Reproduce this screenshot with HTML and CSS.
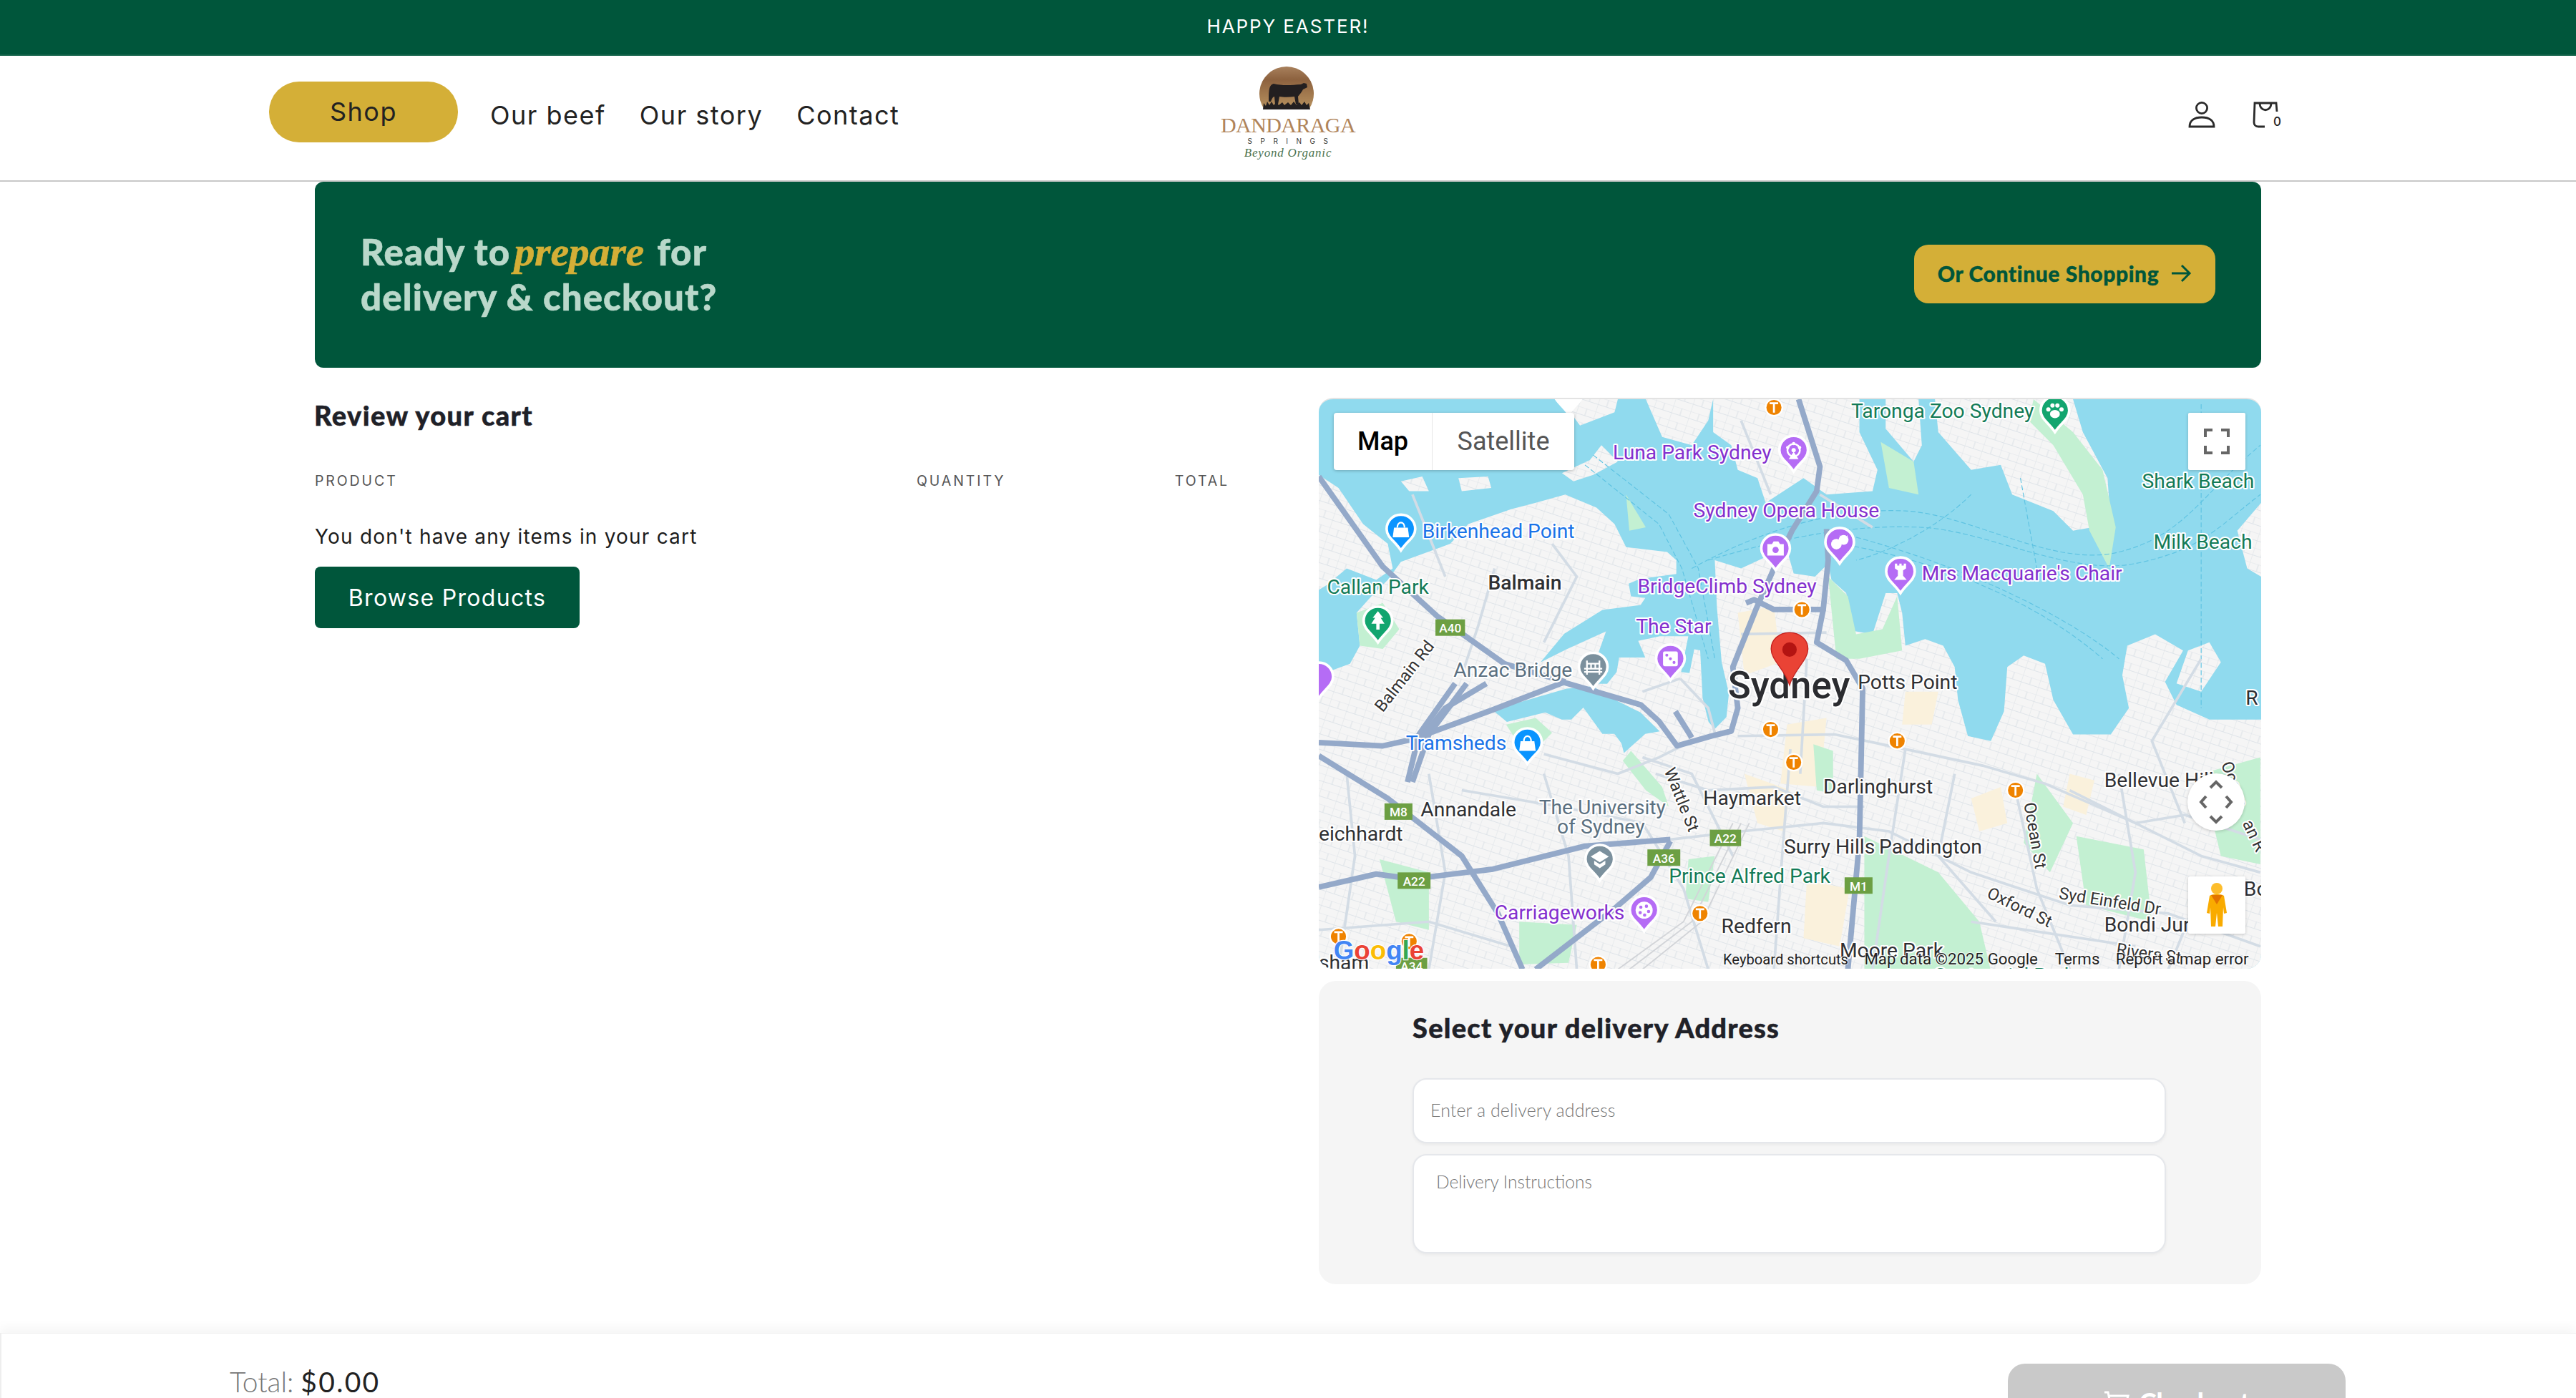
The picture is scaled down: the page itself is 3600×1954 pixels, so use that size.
FILE: index.html
```html
<!DOCTYPE html>
<html lang="en">
<head>
<meta charset="utf-8">
<title>Dandaraga Springs – Checkout</title>
<link rel="stylesheet" href="styles.css">
</head>
<body>
<div class="page">
  <div class="announce">HAPPY EASTER!</div>
  <header class="site-header">
    <nav class="nav">
      <a class="nav-shop">Shop</a>
      <a class="nav-link first">Our beef</a>
      <a class="nav-link">Our story</a>
      <a class="nav-link">Contact</a>
    </nav>
    <div class="logo">
      <svg class="logo-mark" viewBox="0 0 76 60" width="76" height="60">
        <defs><linearGradient id="sun" x1="0" y1="0" x2="0" y2="1"><stop offset="0" stop-color="#a8805c"/><stop offset=".3" stop-color="#8d623f"/><stop offset="1" stop-color="#b8925f"/></linearGradient></defs>
        <path d="M7 60 A38 38 0 1 1 69 60 Z" fill="url(#sun)"/>
        <path d="M13 45 C13 32 14 25 20 24 C32 27 44 26 58 25 L62 23 L66 24 L67 29 L61 32 C58 38 55 40 54 42 L55 53 L51 53 L49 42 C42 43 33 43 28 42 L26 53 L22 53 L21 42 C19 42 17 46 16 49 L13 49 Z" fill="#231f20"/>
        <path d="M5 60 L6 51 L9 55 L11 49 L14 54 L17 49 L20 54 L24 50 L27 54 L32 50 L35 54 L40 50 L44 54 L48 49 L52 54 L56 50 L59 54 L63 49 L66 54 L69 51 L71 60 Z" fill="#231f20"/>
      </svg>
      <div class="logo-name">DANDARAGA</div>
      <div class="logo-springs">SPRINGS</div>
      <div class="logo-tag">Beyond Organic</div>
    </div>
    <div class="header-icons">
      <svg class="icon-user" viewBox="0 0 40 40" width="40" height="40"><circle cx="20" cy="11" r="7.6"/><path d="M3 37 C3 28 10 24 20 24 C30 24 37 28 37 37 Z"/></svg>
      <span class="cart-wrap">
        <svg class="icon-bag" viewBox="0 0 40 40" width="40" height="40"><path d="M20 37 H11 C7 37 5 34 5 31 L6 4 H36 L37 16"/><path d="M13 4 C13 17 29 17 29 4"/></svg>
        <span class="cart-count">0</span>
      </span>
    </div>
  </header>

  <main class="main">
    <section class="banner">
      <h1 class="banner-title">Ready to <em class="script">prepare</em> for<br>delivery &amp; checkout?</h1>
      <a class="continue-btn">Or Continue Shopping
        <svg viewBox="0 0 30 26" width="30" height="26"><path d="M2 13 H27 M16 2 L27 13 L16 24"/></svg>
      </a>
    </section>

    <div class="columns">
      <section class="cart">
        <h2 class="cart-title">Review your cart</h2>
        <div class="cart-head"><span class="col-product">PRODUCT</span><span class="col-qty">QUANTITY</span><span class="col-total">TOTAL</span></div>
        <p class="cart-empty">You don't have any items in your cart</p>
        <a class="browse-btn">Browse Products</a>
      </section>

      <section class="side">
        <div class="map">
          <svg class="map-svg" viewBox="803 242 573.5 347.5" width="1317" height="798">
            <defs>
              <pattern id="streets" width="11" height="9" patternUnits="userSpaceOnUse" patternTransform="rotate(18)">
                <rect width="11" height="9" fill="#f5f5f5"/>
                <path d="M0 0H11M0 4.5H11M0 0V9M5.5 0V4.5" stroke="#dfe4e9" stroke-width=".5" fill="none"/>
              </pattern>
              <g id="pinbody"><path d="M0-8.700C4.900-8.700 8.700-4.900 8.700 0 8.700 5 3.500 7.500 0 13-3.500 7.500-8.700 5-8.700 0-8.700-4.900-4.900-8.700 0-8.700Z" fill="currentColor" stroke="#fff" stroke-width="1.600"/></g>
              <g id="i-bag"><path d="M-4.200-.8H4.200L5 5H-5Z" fill="#fff"/><path d="M-2.200-.8C-2.200-5 2.200-5 2.200-.8" fill="none" stroke="#fff" stroke-width="1"/></g>
              <g id="i-cam"><path d="M-5-2.800H-2.200L-1.200-4.500H1.700L2.700-2.800H5V4.200H-5Z" fill="#fff"/><circle cy=".7" r="1.900" fill="#b56cf5"/></g>
              <g id="i-cats"><circle cx="-2" cy="1.200" r="3.200" fill="#fff"/><circle cx="2.400" cy="-1.400" r="3" fill="#fff"/><path d="M.2-4.500L1-2.600H4L4.800-4.500 4.800-1 .2-1Z" fill="#fff"/></g>
              <g id="i-rook"><path d="M-3.400-5H-2V-3.800H-.7V-5H.7V-3.800H2V-5H3.400V-2L1.600-.8V2.500L3.800 5H-3.800L-1.600 2.500V-.8L-3.400-2Z" fill="#fff"/></g>
              <g id="i-tree"><path d="M0-6L3.200-2H1.700L4 1.600H1V5.200H-1V1.600H-4L-1.700-2H-3.200Z" fill="#fff"/></g>
              <g id="i-dice"><rect x="-4.500" y="-4.500" width="9" height="9" rx="1" fill="#fff"/><circle cx="-2.200" cy="-2.200" r=".9" fill="#b56cf5"/><circle r=".9" fill="#b56cf5"/><circle cx="2.200" cy="2.200" r=".9" fill="#b56cf5"/></g>
              <g id="i-bridge"><path d="M-5.500 1H5.500M-5.500 3H5.500M-3.800-4V4.600M3.800-4V4.600M-3.800-2H3.800M-1.300-2V1M1.300-2V1" stroke="#fff" stroke-width="1" fill="none"/></g>
              <g id="i-school"><path d="M0-5L5.500-1.600 0 1.800-5.500-1.600Z" fill="#fff"/><path d="M-3.400.9L0 3 3.400.9V3.200L0 5.400-3.400 3.200Z" fill="#fff"/></g>
              <g id="i-palette"><circle r="5.200" fill="#fff"/><circle cx="-2" cy="-1.800" r="1" fill="#b56cf5"/><circle cx="1.400" cy="-2.400" r="1" fill="#b56cf5"/><circle cx="2.700" cy=".8" r="1" fill="#b56cf5"/><circle cx="-2.400" cy="1.500" r="1" fill="#b56cf5"/><circle cx=".3" cy="3" r="1" fill="#b56cf5"/></g>
              <g id="i-ferris"><circle r="3.800" fill="none" stroke="#fff" stroke-width="1.100"/><circle r="1.300" fill="#fff"/><circle cy="-4" r="1" fill="#fff"/><circle cx="-3.600" cy="-1.600" r="1" fill="#fff"/><circle cx="3.600" cy="-1.600" r="1" fill="#fff"/><path d="M-3 5.500H3L0 1Z" fill="#fff"/></g>
              <g id="i-paw"><ellipse cy="2" rx="3" ry="2.500" fill="#fff"/><circle cx="-4" cy="-.8" r="1.300" fill="#fff"/><circle cx="-1.500" cy="-3.200" r="1.300" fill="#fff"/><circle cx="1.500" cy="-3.200" r="1.300" fill="#fff"/><circle cx="4" cy="-.8" r="1.300" fill="#fff"/></g>
              <g id="tstop"><circle r="5.100" fill="#ef8300" stroke="#fff" stroke-width="1"/><path d="M-2.600-2.600H2.600M0-2.600V3.200" stroke="#fff" stroke-width="1.200"/></g>
            </defs>

            <rect x="803" y="242" width="574" height="348" fill="url(#streets)"/>
            <g class="beige">
              <path d="M1058 372L1080 368 1084 402 1062 410Z"/>
              <path d="M1088 440L1112 436 1108 478 1084 476Z"/>
              <path d="M1062 470L1090 480 1086 505 1070 500Z"/>
              <path d="M1100 535L1126 540 1120 575 1098 570Z"/>
              <path d="M1200 485L1218 478 1222 500 1205 505Z"/>
              <path d="M1260 470L1275 474 1270 495 1256 490Z"/>
              <path d="M1160 420L1180 420 1176 440 1158 440Z"/>
            </g>
            <path class="park" d="M993 456L1012 478 1016 490 1002 480 988 462Z"/>
            <path class="park" d="M1135 508L1180 530 1205 560 1212 590H1135Z"/>
            <path class="park" d="M1104 452L1116 456 1116 482 1106 480Z"/>
            <path class="park" d="M1028 522L1044 520 1040 548 1026 546Z"/>
            <path class="park" d="M1264 508L1305 516 1310 560 1270 550Z"/>
            <path class="park" d="M840 522L870 530 870 565 850 560Z"/>
            <path class="park" d="M1240 470L1262 500 1248 530 1232 512Z"/>
            <path class="park" d="M1340 470L1376 460V525L1352 520Z"/>
            <path class="park" d="M925 560L960 562 955 585 925 586Z"/>
            <path class="park" d="M917 440L935 436 945 445 930 460Z"/>

            <path class="water" d="M803 242H1376.500V437H1345L1325 428 1318 414 1329 395 1312 385 1295 392 1292 410 1296 430 1285 446H1262L1250 425 1245 403 1232 398 1222 405 1220 432 1212 450 1198 447 1192 425 1190 405 1183 392 1172 388 1160 392 1158 372 1155 360 1148 360 1140 385 1128 383 1124 360 1115 352 1113 342 1105 350 1092 348 1088 334 1075 338 1060 345 1044 340 1045.300 368.700 1048.200 402.100 1052.600 421 1051.100 435.500 1043.900 442.800 1040.200 438.400 1036.600 423.900 1035.100 394.900 1031.500 394.200 1028.600 408.700 1023.500 408 1027.900 386.200 1010.500 386.200 997.400 389.100 1001.700 399.200 985.800 399.200 984.300 408 978.500 415.200 969.800 415.200 972.700 397.800 977.800 383.300 953.800 394.200 937.900 402.100 952.400 384.700 975.600 370.200 998.800 367.300 1001.700 362.900 993 362 991.600 354.200 998.800 351.300 1020.600 348.400 1020.600 340 1015 335 990 332 983 318 972 308 953 300 935 305 920 309 894 318 883 330 853 341 845 352 835 362 826 372 828 392 822 403 803 410Z"/>
            <path class="water" d="M908.800 431.200L953.800 418.100 969.800 416.700 984.300 425.400 998.800 432.600 1010.500 444.200 1001.700 445.700 988.700 457.300 987.200 451.500 982.900 445.700 975.600 445.700 964 429.700 956.700 437 950.900 437 940.800 432.600 917.500 438.400Z"/>

            <g class="land">
              <path d="M803 288L815 296 830 318 845 330 848 345 838 352 820 345 808 355 803 358Z"/>
              <path d="M1043 242V262L1054 270 1058 285 1070 290 1075 305 1098 290 1112 300 1140 298 1143 285 1132 262V242Z"/>
              <path d="M1002 242L1012 265 1030 270 1040 255 1043 242Z"/>
              <path d="M950 242L962 258 983 250 985 242Z"/>
              <path d="M951 287L968 279 975 270 985 280 970 288 958 292Z"/>
              <path d="M853 292L866 289 870 298 858 298ZM888 290L906 289 908 296 890 298Z"/>
              <path d="M1148 242V260L1165 280 1170 270 1168 242Z"/>
              <path d="M1178 242L1180 262 1200 285 1218 282 1225 300 1250 310 1262 322 1285 318 1283 290 1268 262 1262 242Z"/>
              <path d="M1376.500 305L1362 322 1368 345 1376.500 350Z"/>
              <path d="M1325 415L1332 395 1345 390 1352 402 1340 420Z"/>
            </g>
            <path class="park" d="M1238 242L1262 262 1280 285 1288 320 1284 345 1272 322 1268 300 1250 270 1235 255Z"/>
            <path class="park" d="M1113 350L1125 362 1130 385 1146 382 1155 362 1158 395 1132 400 1118 400Z"/>
            <path class="park" d="M826 372L842 366 852 382 842 394 828 392Z"/>
            <path class="park" d="M1145 268L1165 280 1168 300 1150 296Z"/>
            <path class="park" d="M990 300L1002 320 992 322Z"/>

            <g class="lanes">
              <path d="M965 282L1010 318 1024 345 1040 400"/>
              <path d="M970 276L1016 312 1034 345 1044 400"/>
              <path d="M1030 345C1075 320 1120 308 1160 310S1250 345 1290 335 1340 300 1376 270"/>
              <path d="M1040 340C1090 325 1130 318 1170 320S1260 350 1300 342 1350 320 1376 300"/>
              <path d="M1120 330C1180 340 1240 365 1280 400"/>
              <path d="M1130 326C1200 345 1260 375 1290 400"/>
              <path d="M1200 300C1180 320 1150 335 1130 340"/>
              <path d="M1230 290L1240 345"/>
              <path d="M1340 245V430"/>
            </g>

            <g class="road-minor">
              <path d="M1017 510L1060 505 1110 500 1150 505 1200 530 1260 550 1320 555 1376 575"/>
              <path d="M1058 447L1117 446 1160 455 1207 465 1245 476 1300 500 1330 495 1376 510"/>
              <path d="M1008 470L1040 480 1080 478 1110 490 1135 490"/>
              <path d="M940 458L985 470 1010 460 1030 450"/>
              <path d="M890 480L950 490 1000 500"/>
              <path d="M1000 500L1025 540 1040 589"/>
              <path d="M1090 455L1085 520 1080 589"/>
              <path d="M1160 455L1150 520 1140 589"/>
              <path d="M1227 480L1240 540 1260 589"/>
              <path d="M803 565L870 560 920 575"/>
              <path d="M1290 470L1300 530 1290 589"/>
              <path d="M1340 400L1310 450 1330 500"/>
              <path d="M910 345L900 380 890 410"/>
              <path d="M945 330L960 350 940 390"/>
              <path d="M1060 255L1078 300"/>
              <path d="M1108 300L1140 320"/>
              <path d="M1023 412L1000 420M1023 412L1040 430 1044 445"/>
              <path d="M1000 460L1030 470 1055 520"/>
              <path d="M1060 385L1112 384"/>
              <path d="M1100 400L1096 470"/>
              <path d="M820 470L825 520 815 589"/>
              <path d="M870 470L880 530 870 589"/>
              <path d="M940 470L955 520 960 589"/>
              <path d="M1190 470L1180 520 1215 560"/>
              <path d="M1260 480L1340 520 1376 530"/>
              <path d="M1200 560L1300 575"/>
              <path d="M1340 540L1320 589"/>
              <path d="M860 300L880 350"/>
            </g>
            <path class="rail" d="M1055 500L1025 560 985 589M1060 500L1030 560 992 589M1065 500L1036 560 1000 589"/>

            <g class="road-major">
              <path d="M951 414L999 428 1010 438 1021 453 1042 447 1054 444 1058 430 1055 405 1069 370 1080 345 1091 322 1106 298 1108 283 1095 242"/>
              <path d="M1063 366L1068 364 1080 370H1110L1113 340 1112 321"/>
              <path d="M1110 370L1106 390 1124 401 1134 418 1132 511 1125 589"/>
              <path d="M803 289L842 344 875 374 916 403 953 414"/>
              <path d="M803 451L842 453 860 449 909 431 953 414"/>
              <path d="M886 415L864 446 857 475"/>
              <path d="M893 415L870 446 860 475"/>
              <path d="M803 459L845 485 890 520 912 555 927 589"/>
              <path d="M803 539L838 531 860 534 909 528 965 514 1017 510"/>
              <path d="M1017 511L1005 533 983 552 935 589"/>
              <path d="M1020 432L1030 448"/>
              <path d="M860 455L880 430 905 415"/>
            </g>

            <g class="shields">
              <rect x="874" y="376" width="18" height="10"/><text x="883" y="384">A40</text>
              <rect x="1041" y="504" width="19" height="10"/><text x="1050.500" y="512">A22</text>
              <rect x="843" y="488" width="17" height="10"/><text x="851.500" y="496">M8</text>
              <rect x="1003" y="516" width="20" height="10"/><text x="1013" y="524">A36</text>
              <rect x="851" y="530" width="20" height="10"/><text x="861" y="538">A22</text>
              <rect x="1123" y="533" width="17" height="10"/><text x="1131.500" y="541">M1</text>
              <rect x="850" y="582" width="19" height="10"/><text x="859.500" y="590">A34</text>
            </g>

            <g class="labels dark">
              <text class="medium" x="906" y="358">Balmain</text>
              <text x="1131" y="418.500">Potts Point</text>
              <text x="1110" y="482">Darlinghurst</text>
              <text x="1037" y="489">Haymarket</text>
              <text x="865" y="496">Annandale</text>
              <text x="803" y="510.500">eichhardt</text>
              <text x="1086" y="518.500">Surry Hills</text>
              <text x="1144" y="518.500">Paddington</text>
              <text x="1048" y="567">Redfern</text>
              <text x="1120" y="581.500">Moore Park</text>
              <text x="1281" y="478">Bellevue Hill</text>
              <text x="1281" y="566">Bondi Junction</text>
              <text x="803" y="589">sham</text>
              <text x="1367" y="428">R</text>
              <text x="1366" y="544">Bo</text>
            </g>
            <g class="labels grey">
              <text x="885" y="411">Anzac Bridge</text>
              <text x="937" y="494.500">The University</text>
              <text x="948" y="506.500">of Sydney</text>
            </g>
            <g class="labels roadname">
              <text transform="translate(842,433) rotate(-52)">Balmain Rd</text>
              <text transform="translate(1013,468) rotate(68)">Wattle St</text>
              <text transform="translate(1232,488) rotate(80)">Ocean St</text>
              <text transform="translate(1209,545) rotate(26)">Oxford St</text>
              <text transform="translate(1253,546) rotate(9)">Syd Einfeld Dr</text>
              <text transform="translate(1352,464) rotate(70)">Ocean</text>
              <text transform="translate(1365,500) rotate(65)">an R</text>
              <text transform="translate(1288,580) rotate(8)">Rivers St</text>
            </g>
            <g class="labels poi-blue">
              <text x="866" y="326.500">Birkenhead Point</text>
              <text x="856" y="455.500">Tramsheds</text>
            </g>
            <g class="labels poi-purple">
              <text x="982" y="278.500">Luna Park Sydney</text>
              <text x="1031" y="314">Sydney Opera House</text>
              <text x="997" y="360">BridgeClimb Sydney</text>
              <text x="996" y="384.500">The Star</text>
              <text x="1170" y="352">Mrs Macquarie's Chair</text>
              <text x="910" y="558.500">Carriageworks</text>
            </g>
            <g class="labels poi-green">
              <text x="1127" y="253.500">Taronga Zoo Sydney</text>
              <text x="1304" y="296">Shark Beach</text>
              <text x="1311" y="333">Milk Beach</text>
              <text x="808" y="360.500">Callan Park</text>
              <text x="1016" y="536.500">Prince Alfred Park</text>
              <text x="1177" y="597">Centennial Park</text>
            </g>

            <g class="pin purple" transform="translate(1092,273)"><use href="#pinbody"/><use href="#i-ferris"/></g>
            <g class="pin green" transform="translate(1251,249)"><use href="#pinbody"/><use href="#i-paw"/></g>
            <g class="pin blue" transform="translate(853,321)"><use href="#pinbody"/><use href="#i-bag"/></g>
            <g class="pin purple" transform="translate(1081,333)"><use href="#pinbody"/><use href="#i-cam"/></g>
            <g class="pin purple" transform="translate(1120,329)"><use href="#pinbody"/><use href="#i-cats"/></g>
            <g class="pin purple" transform="translate(1157,347)"><use href="#pinbody"/><use href="#i-rook"/></g>
            <g class="pin green" transform="translate(839,377)"><use href="#pinbody"/><use href="#i-tree"/></g>
            <g class="pin purple" transform="translate(1017,400)"><use href="#pinbody"/><use href="#i-dice"/></g>
            <g class="pin grey" transform="translate(970,405)"><use href="#pinbody"/><use href="#i-bridge"/></g>
            <g class="pin purple" transform="translate(803,411)"><use href="#pinbody"/></g>
            <g class="pin blue" transform="translate(930,451)"><use href="#pinbody"/><use href="#i-bag"/></g>
            <g class="pin grey" transform="translate(974,522)"><use href="#pinbody"/><use href="#i-school"/></g>
            <g class="pin purple" transform="translate(1001,553)"><use href="#pinbody"/><use href="#i-palette"/></g>
            <g class="pin white" transform="translate(955,238)"><use href="#pinbody"/></g>

            <use href="#tstop" x="1080" y="247"/>
            <use href="#tstop" x="1097" y="370"/>
            <use href="#tstop" x="1078" y="443"/>
            <use href="#tstop" x="1155" y="450"/>
            <use href="#tstop" x="1092" y="463"/>
            <use href="#tstop" x="1227" y="480"/>
            <use href="#tstop" x="1035" y="555"/>
            <use href="#tstop" x="815" y="569"/>
            <use href="#tstop" x="858" y="572"/>
            <use href="#tstop" x="973" y="586"/>

            <text class="label-city" x="1052" y="424">Sydney</text>
            <g transform="translate(1089.500,395)">
              <path d="M0-11C6.500-11 11.200-6.500 11.200-1 11.200 6 3 11 0 21-3 11-11.200 6-11.200-1-11.200-6.500-6.500-11 0-11Z" fill="#ea4335" stroke="#c5221f" stroke-width=".6"/>
              <circle cy="-.6" r="4.400" fill="#b31412"/>
            </g>

            <text class="g-logo" x="812" y="583"><tspan class="g-b">G</tspan><tspan class="g-r">o</tspan><tspan class="g-y">o</tspan><tspan class="g-b">g</tspan><tspan class="g-g">l</tspan><tspan class="g-r">e</tspan></text>
            <g class="attrib">
              <text class="attrib-short" x="1049" y="586">Keyboard shortcuts</text>
              <text x="1135" y="586">Map data ©2025 Google</text>
              <text x="1251" y="586">Terms</text>
              <text x="1288" y="586">Report a map error</text>
            </g>
          </svg>

          <div class="map-type">
            <button class="map-type-btn active">Map</button>
            <button class="map-type-btn">Satellite</button>
          </div>
          <button class="map-ctl fullscreen" aria-label="Fullscreen">
            <svg viewBox="0 0 36 36" width="36" height="36"><path d="M2 12V2H12M24 2H34V12M34 24V34H24M12 34H2V24"/></svg>
          </button>
          <button class="map-ctl rotate" aria-label="Move camera">
            <svg viewBox="0 0 50 62" width="50" height="62"><path class="chev" d="M17 11L25 3 33 11M17 51L25 59 33 51M11 23L4 31 11 39M39 23L46 31 39 39"/></svg>
          </button>
          <button class="map-ctl pegman" aria-label="Street View">
            <svg viewBox="0 0 36 66" width="36" height="66"><circle cx="18" cy="10" r="8" fill="#fdbd2c"/><path d="M8 20C12 17 24 17 28 20L32 44 28 45 27 36 26 63H20L18 44 16 63H10L9 36 8 45 4 44Z" fill="#f9ab00"/><path d="M10 19L18 32 26 19Z" fill="#e37400"/></svg>
          </button>
        </div>

        <div class="delivery">
          <h2 class="delivery-title">Select your delivery Address</h2>
          <input class="field field-input" placeholder="Enter a delivery address">
          <textarea class="field field-area" placeholder="Delivery Instructions"></textarea>
        </div>
      </section>
    </div>
  </main>

  <footer class="footer">
    <div class="total"><span class="total-label">Total:</span> <span class="total-value">$0.00</span></div>
    <button class="checkout">
      <svg viewBox="0 0 36 30" width="36" height="30"><path d="M1 2H6L10 22H30L34 7H8"/></svg>
      Checkout
    </button>
  </footer>
</div>
</body>
</html>
```
FILE: styles.css
```css
* { box-sizing: border-box; }
html, body { margin: 0; padding: 0; }
body { font-family: Inter, "Liberation Sans", sans-serif; color: #222; background: #fff; }
a { text-decoration: none; color: inherit; }
.page { height: 100vh; overflow: hidden; display: flex; flex-direction: column; }

.announce { height: 78px; flex: none; background: #00563b; border-bottom: 2px solid #13634a; color: #fff; font-size: 26px; letter-spacing: 1.900px; padding-bottom: 3px; display: flex; align-items: center; justify-content: center; }

.site-header { height: 176px; flex: none; border-bottom: 2px solid #c8c8c8; display: grid; grid-template-columns: 1fr auto 1fr; align-items: center; background: #fff; }
.nav { display: flex; align-items: center; padding-left: 376px; margin-top: -10px; }
.nav-shop { width: 264px; height: 85px; margin-top: -8px; border-radius: 42px; background: #d4af37; font-size: 36px; letter-spacing: 1.500px; display: flex; align-items: center; justify-content: center; color: #222; }
.nav-link { font-size: 36px; letter-spacing: 1.500px; margin-left: 47px; line-height: 44px; margin-top: 2px; }
.nav-link.first { margin-left: 45px; }
.logo { width: 190px; display: flex; flex-direction: column; align-items: center; margin-top: -13px; }
.logo-mark { display: block; margin-right: 5px; }
.logo-name { font-family: "Liberation Serif", serif; font-size: 30px; line-height: 25px; margin-top: 9px; color: #b0845a; letter-spacing: -.6px; white-space: nowrap; }
.logo-springs { font-size: 10px; line-height: 12px; letter-spacing: 11.500px; color: #333; margin-top: 4px; margin-right: -11px; }
.logo-tag { font-family: "Liberation Serif", serif; font-style: italic; font-size: 17px; line-height: 22px; color: #4c7350; letter-spacing: .8px; white-space: nowrap; }
.header-icons { display: flex; justify-content: flex-end; align-items: center; gap: 48px; padding-right: 415px; margin-top: -10px; }
.icon-user, .icon-bag { fill: none; stroke: #2a2a2a; stroke-width: 2.800; display: block; }
.cart-wrap { position: relative; display: block; }
.cart-count { position: absolute; right: -3px; top: 20px; font-size: 17px; font-weight: 500; line-height: 20px; }

.main { flex: 1; min-height: 0; padding: 0 440px; }
.banner { height: 260px; background: #00563b; border-radius: 12px; padding: 0 64px 2px; display: flex; align-items: center; justify-content: space-between; }
.banner-title { margin: 0; font-family: Lato, sans-serif; font-weight: 900; font-size: 51px; line-height: 63px; letter-spacing: 1.100px; color: #b9d8ca; -webkit-text-stroke: .6px currentColor; }
.script { font-family: "Liberation Serif", serif; font-weight: 700; font-style: italic; color: #d4af37; font-size: 58px; letter-spacing: -.3px; margin: 0 5px 0 -8px; }
.continue-btn { width: 421px; height: 82px; border-radius: 20px; background: #d4af37; color: #00563b; font-family: Lato, sans-serif; font-weight: 900; font-size: 30px; letter-spacing: .6px; -webkit-text-stroke: .4px currentColor; display: flex; align-items: center; justify-content: center; gap: 16px; padding-bottom: 2px; }
.continue-btn svg { fill: none; stroke: #00563b; stroke-width: 3; flex: none; }

.columns { display: grid; grid-template-columns: 1278px 1317px; column-gap: 125px; margin-top: 42px; }
.cart-title { margin: 0; font-family: Lato, sans-serif; font-weight: 900; font-size: 38px; line-height: 46px; letter-spacing: 1.400px; -webkit-text-stroke: .5px currentColor; color: #1f2128; padding-top: 1px; margin-left: -1px; }
.cart-head { display: grid; grid-template-columns: 841px 1fr auto; margin-top: 57px; font-size: 19.500px; line-height: 24px; letter-spacing: 2.900px; color: #555; }
.cart-empty { margin: 49px 0 0; font-size: 28px; line-height: 34px; letter-spacing: 1.200px; color: #1c1c1c; }
.browse-btn { display: flex; width: 370px; height: 86px; margin-top: 25px; align-items: center; justify-content: center; background: #00563b; border-radius: 8px; color: #fff; font-size: 32px; letter-spacing: 1.300px; }

.side { display: flex; flex-direction: column; gap: 17px; }
.map { position: relative; height: 798px; border-radius: 20px; overflow: hidden; border-top: 2px solid #e3e3e3; background: #90daee; }
.map-svg { position: absolute; left: 0; top: 0; display: block; }
.water { fill: #90daee; }
.land path { fill: url(#streets); }
.beige path { fill: #faf1dc; }
.park { fill: #c3f0d2; }
.lanes path { fill: none; stroke: #5fc3e2; stroke-width: .5; stroke-dasharray: 3 1.500; }
.road-minor path { fill: none; stroke: #d3dce5; stroke-width: 1.600; }
.rail { fill: none; stroke: #d2d4d8; stroke-width: .8; }
.road-major path { fill: none; stroke: #94a9c9; stroke-width: 3.400; stroke-linejoin: round; }
.shields rect { fill: #6c9f43; }
.shields text { font-family: Roboto, sans-serif; font-size: 7.500px; font-weight: 500; fill: #fff; text-anchor: middle; }
.labels text { font-family: Roboto, sans-serif; font-size: 12.300px; paint-order: stroke; stroke: #fff; stroke-width: 1.800px; stroke-linejoin: round; }
.labels .medium { font-weight: 500; }
.dark text { fill: #2f3033; }
.grey text { fill: #5b7080; }
.roadname text { fill: #333; font-size: 10.200px; }
.poi-blue text { fill: #1a73e8; }
.poi-purple text { fill: #8430ce; }
.poi-green text { fill: #137b57; }
.label-city { font-family: Roboto, sans-serif; font-size: 23px; font-weight: 500; fill: #2b2c30; paint-order: stroke; stroke: #fff; stroke-width: 2px; stroke-linejoin: round; }
.pin.purple { color: #b56cf5; }
.pin.green { color: #12a56f; }
.pin.blue { color: #0a94ff; }
.pin.grey { color: #7b909d; }
.pin.white { color: #fff; }
.g-logo { font-family: "Liberation Sans", sans-serif; font-size: 16px; font-weight: 700; paint-order: stroke; stroke: #fff; stroke-width: 1px; }
.g-b { fill: #4285f4; } .g-r { fill: #ea4335; } .g-y { fill: #fbbc05; } .g-g { fill: #34a853; }
.attrib text { font-family: Roboto, sans-serif; font-size: 9.700px; fill: #222; paint-order: stroke; stroke: rgba(255,255,255,.7); stroke-width: 1px; }
.attrib .attrib-short { font-size: 8.800px; }

.map-type { position: absolute; left: 21px; top: 19px; display: flex; height: 80px; background: #fff; box-shadow: 0 1px 4px rgba(0,0,0,.25); border-radius: 4px; }
.map-type-btn { border: 0; background: none; font-family: Roboto, sans-serif; font-size: 36px; color: #565656; padding: 0; height: 80px; width: 198px; }
.map-type-btn.active { width: 138px; color: #000; font-weight: 500; border-right: 1px solid #e6e6e6; }
.map-ctl { position: absolute; border: 0; background: #fff; padding: 0; display: flex; align-items: center; justify-content: center; box-shadow: 0 1px 4px rgba(0,0,0,.2); }
.fullscreen { left: 1215px; top: 19px; width: 80px; height: 80px; border-radius: 2px; }
.fullscreen svg { fill: none; stroke: #666; stroke-width: 4; }
.rotate { left: 1214px; top: 523px; width: 80px; height: 80px; border-radius: 50%; }
.rotate .chev { fill: none; stroke: #666; stroke-width: 4; }
.pegman { left: 1215px; top: 667px; width: 80px; height: 80px; border-radius: 2px; }

.delivery { height: 424px; background: #f5f5f5; border-radius: 24px; padding: 42px 133px 0 131px; display: flex; flex-direction: column; }
.delivery-title { margin: 0 0 48px 0; font-family: Lato, sans-serif; font-weight: 900; font-size: 38px; line-height: 46px; letter-spacing: 1.250px; -webkit-text-stroke: .5px currentColor; color: #1f2128; }
.field { display: block; width: 100%; flex: none; border: 2px solid #e5e7eb; border-radius: 20px; background: #fff; box-shadow: 0 2px 4px rgba(0,0,0,.05); font-family: Lato, sans-serif; font-weight: 300; font-size: 25px; color: #333; outline: none; margin: 0; resize: none; }
.field::placeholder { color: #777; opacity: 1; }
.field-input { height: 91px; padding: 0 23px 3px; letter-spacing: .1px; }
.field-area { height: 139px; margin-top: 15px; padding: 22px 31px; line-height: 30px; font-size: 24.500px; }

.footer { height: 91px; flex: none; background: #fff; border-top: 1px solid #f0f0f0; border-left: 2px solid #eee; box-shadow: 0 -8px 14px rgba(0,0,0,.04); padding: 42px 322px 0 319px; display: flex; justify-content: space-between; align-items: flex-start; position: relative; }
.total { font-family: Lato, sans-serif; font-size: 39px; line-height: 46px; margin-top: 2px; white-space: nowrap; }
.total-label { color: #777; font-weight: 300; }
.total-value { color: #222; letter-spacing: 2.300px; }
.checkout { width: 472px; height: 106px; flex: none; border: 0; border-radius: 24px; background: #c9c9c9; color: #fff; font-family: Lato, sans-serif; font-weight: 900; font-size: 36px; display: flex; align-items: center; justify-content: center; gap: 14px; padding: 0; }
.checkout svg { fill: none; stroke: #fff; stroke-width: 3; }
```
